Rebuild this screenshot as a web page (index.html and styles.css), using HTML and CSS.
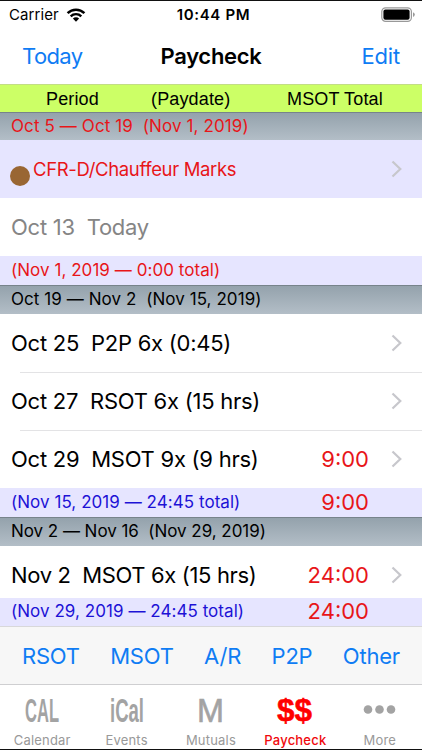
FILE: index.html
```html
<!DOCTYPE html>
<html lang="en">
<head>
    <meta charset="UTF-8">
    <meta name="viewport" content="width=device-width, initial-scale=1.0">
    <title>Paycheck</title>
    <link rel="stylesheet" href="styles.css">
</head>
<body>
    <div class="status">
        <div class="carrier">
            <span>Carrier</span>
            <svg width="20" height="14" viewBox="0 0 20 14">
                <path d="M1.6 5.1 A12 12 0 0 1 18.4 5.1" fill="none" stroke="#000" stroke-width="2.5"/>
                <path d="M4.7 8.3 A7.6 7.6 0 0 1 15.3 8.3" fill="none" stroke="#000" stroke-width="2.4"/>
                <path d="M6.9 10.6 A4.4 4.4 0 0 1 13.1 10.6 L10 13.7 Z"/>
            </svg>
        </div>
        <span class="clock">10:44 PM</span>
        <svg class="battery" width="35" height="16" viewBox="0 0 35 16">
            <rect x="0.8" y="0.8" width="29.6" height="13.6" rx="3.8" fill="none" stroke="#999" stroke-width="1.2"/>
            <rect x="2.4" y="2.4" width="26.2" height="10.4" rx="2"/>
            <path d="M32 5.2 Q33.8 5.8 33.8 7.6 Q33.8 9.4 32 10 Z" fill="#999"/>
        </svg>
    </div>

    <div class="nav">
        <a class="today">Today</a>
        <h1>Paycheck</h1>
        <a class="edit">Edit</a>
    </div>

    <div class="columns">
        <span>Period</span>
        <span>(Paydate)</span>
        <span>MSOT Total</span>
    </div>

    <div class="period red first">Oct 5 — Oct 19&nbsp; (Nov 1, 2019)</div>
    <div class="row marks red">
        <span class="dot"></span>
        <span class="text">CFR-D/Chauffeur Marks</span>
        <svg class="chevron" width="12" height="18" viewBox="0 0 12 18"><path d="M1.5 1.5 L9.3 9 L1.5 16.5"/></svg>
    </div>
    <div class="row gray">
        <span class="text">Oct 13&nbsp; Today</span>
    </div>
    <div class="total red"><span>(Nov 1, 2019 — 0:00 total)</span></div>

    <div class="period">Oct 19 — Nov 2&nbsp; (Nov 15, 2019)</div>
    <div class="row">
        <span class="text">Oct 25&nbsp; P2P 6x (0:45)</span>
        <svg class="chevron" width="12" height="18" viewBox="0 0 12 18"><path d="M1.5 1.5 L9.3 9 L1.5 16.5"/></svg>
    </div>
    <div class="row line">
        <span class="text">Oct 27&nbsp; RSOT 6x (15 hrs)</span>
        <svg class="chevron" width="12" height="18" viewBox="0 0 12 18"><path d="M1.5 1.5 L9.3 9 L1.5 16.5"/></svg>
    </div>
    <div class="row line">
        <span class="text">Oct 29&nbsp; MSOT 9x (9 hrs)</span>
        <span class="hours">9:00</span>
        <svg class="chevron" width="12" height="18" viewBox="0 0 12 18"><path d="M1.5 1.5 L9.3 9 L1.5 16.5"/></svg>
    </div>
    <div class="total"><span>(Nov 15, 2019 — 24:45 total)</span><span class="hours">9:00</span></div>

    <div class="period tight">Nov 2 — Nov 16&nbsp; (Nov 29, 2019)</div>
    <div class="row last">
        <span class="text">Nov 2&nbsp; MSOT 6x (15 hrs)</span>
        <span class="hours">24:00</span>
        <svg class="chevron" width="12" height="18" viewBox="0 0 12 18"><path d="M1.5 1.5 L9.3 9 L1.5 16.5"/></svg>
    </div>
    <div class="total bottom"><span>(Nov 29, 2019 — 24:45 total)</span><span class="hours">24:00</span></div>

    <div class="toolbar">
        <a>RSOT</a>
        <a>MSOT</a>
        <a>A/R</a>
        <a>P2P</a>
        <a>Other</a>
    </div>

    <div class="tabs">
        <div class="tab">
            <svg width="84" height="38"><text x="25" y="31" textLength="34" lengthAdjust="spacingAndGlyphs">CAL</text></svg>
            <span>Calendar</span>
        </div>
        <div class="tab">
            <svg width="84" height="38"><text x="25" y="31" textLength="34" lengthAdjust="spacingAndGlyphs">iCal</text></svg>
            <span>Events</span>
        </div>
        <div class="tab">
            <svg width="84" height="38"><text class="m" x="28" y="30.5" textLength="27" lengthAdjust="spacingAndGlyphs">M</text></svg>
            <span>Mutuals</span>
        </div>
        <div class="tab active">
            <svg width="84" height="38"><text class="dollars" x="24" y="30" textLength="35" lengthAdjust="spacingAndGlyphs">$$</text></svg>
            <span>Paycheck</span>
        </div>
        <div class="tab">
            <svg width="84" height="38"><circle cx="30" cy="18.5" r="4.3"/><circle cx="41.5" cy="18.5" r="4.3"/><circle cx="53" cy="18.5" r="4.3"/></svg>
            <span>More</span>
        </div>
    </div>
</body>
</html>
```
FILE: styles.css
```css
* {
    box-sizing: border-box;
}
body {
    margin: 0;
    width: 422px;
    height: 750px;
    overflow: hidden;
    border-top: 1px solid #111;
    border-bottom: 1px solid #111;
    background-color: #fff;
    font-family: Inter, "Liberation Sans", sans-serif;
    color: #000;
    white-space: nowrap;
}
.status {
    display: grid;
    grid-template-columns: 1fr auto 1fr;
    align-items: center;
    height: 27px;
    padding: 0 6px 0 9px;
    font-size: 15px;
}
.carrier {
    display: flex;
    align-items: center;
    gap: 7px;
    letter-spacing: 0.1px;
}
.clock {
    margin-left: 2px;
    font-weight: 600;
    font-size: 15px;
    letter-spacing: 0.65px;
}
.battery {
    justify-self: end;
}
.nav {
    display: grid;
    grid-template-columns: 1fr auto 1fr;
    align-items: center;
    height: 56px;
    padding: 0 22px;
}
.nav h1 {
    margin: 0;
    font-size: 22px;
    font-weight: 600;
    letter-spacing: -0.3px;
}
.nav a,
.toolbar a {
    color: #0f7cf4;
    font-size: 22px;
    letter-spacing: -0.2px;
}
.nav .today {
    letter-spacing: -0.6px;
}
.nav .edit {
    justify-self: end;
}
.columns {
    display: grid;
    grid-template-columns: 105px 136px 1fr;
    align-items: center;
    height: 28px;
    padding: 1px 0 0 46px;
    border-top: 1px solid #c3dd85;
    background-color: #ccff66;
    font-family: "Liberation Sans", Arial, sans-serif;
    font-size: 18px;
    letter-spacing: 0.15px;
}
.period {
    height: 29px;
    padding-left: 11px;
    border-top: 1px solid #77838b;
    background: linear-gradient(#94a2ac, #b3bec7);
    font-size: 17px;
    line-height: 26px;
    letter-spacing: 0.07px;
}
.period.first {
    height: 28px;
    letter-spacing: 0.11px;
}
.period.tight {
    letter-spacing: -0.04px;
}
.red,
.period.red {
    color: #e81519;
}
.row {
    position: relative;
    display: flex;
    align-items: center;
    height: 58px;
    padding: 0 19px 0 11px;
    font-size: 22px;
    letter-spacing: -0.25px;
}
.row .text {
    flex: 1;
}
.line::before {
    content: "";
    position: absolute;
    top: 0;
    left: 20px;
    right: 0;
    height: 1px;
    background-color: #e3e3e5;
}
.marks {
    background-color: #e6e5ff;
    padding-left: 10px;
    font-size: 18.5px;
    letter-spacing: -0.35px;
}
.dot {
    width: 20px;
    height: 20px;
    margin: 14px 3px 0 0;
    border-radius: 50%;
    background-color: #996633;
}
.gray {
    color: #858585;
}
.last {
    height: 52px;
    padding-top: 6px;
    letter-spacing: -0.35px;
}
.chevron {
    fill: none;
    stroke: #c7c7cc;
    stroke-width: 2.2;
}
.hours {
    color: #e81519;
    font-size: 22px;
    letter-spacing: 0;
}
.row .hours {
    margin-right: 22px;
}
.total {
    display: flex;
    align-items: center;
    justify-content: space-between;
    height: 29px;
    padding: 0 53px 2px 11px;
    background-color: #e6e5ff;
    color: #1d12d6;
    font-size: 17px;
    letter-spacing: 0.05px;
}
.total.red {
    color: #e81519;
}
.total.bottom {
    height: 28px;
}
.toolbar {
    display: flex;
    align-items: center;
    justify-content: space-between;
    height: 58px;
    padding: 0 22px;
    border-top: 1px solid #d8d8da;
    background-color: #f7f7f7;
}
.tabs {
    display: grid;
    grid-template-columns: repeat(5, 84.4px);
    height: 65px;
    border-top: 1px solid #cfcfd1;
    background-color: #fff;
}
.tab {
    display: flex;
    flex-direction: column;
    align-items: center;
    padding-top: 6px;
    color: #999;
    font-size: 13px;
    line-height: 16px;
    letter-spacing: 0.2px;
}
.tab svg {
    overflow: visible;
    fill: #a3a3a3;
    stroke: none;
    font-family: "Liberation Sans", Arial, sans-serif;
    font-weight: bold;
    font-size: 34px;
    letter-spacing: 0;
}
.tab .m {
    font-weight: normal;
    font-size: 33px;
    stroke: #a3a3a3;
    stroke-width: 0.6px;
}
.tab .dollars {
    font-size: 32px;
    stroke: #f00;
    stroke-width: 0.5px;
}
.tab span {
    margin-top: 3px;
}
.active {
    color: #f0090c;
    font-weight: 500;
}
.active svg {
    fill: #f00;
}
```
